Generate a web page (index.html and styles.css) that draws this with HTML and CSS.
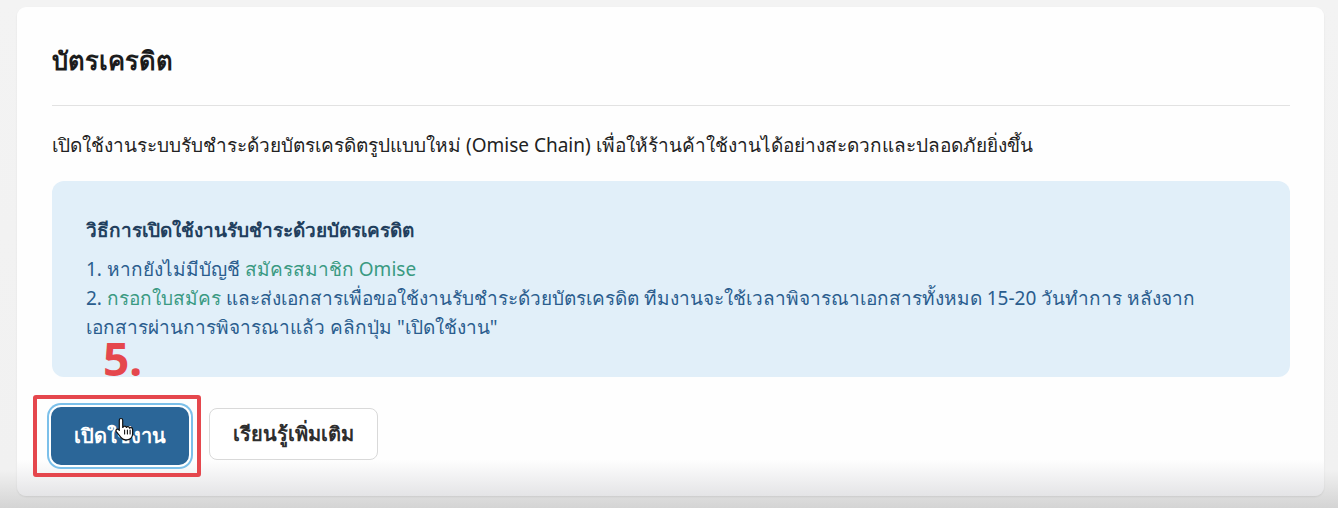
FILE: index.html
```html
<!DOCTYPE html>
<html lang="th">
<head>
<meta charset="utf-8">
<link rel="stylesheet" href="styles.css">
</head>
<body>
<div class="page">
  <section class="card">
    <h1 class="title">บัตรเครดิต</h1>
    <hr class="divider">
    <p class="desc">เปิดใช้งานระบบรับชำระด้วยบัตรเครดิตรูปแบบใหม่ (Omise Chain) เพื่อให้ร้านค้าใช้งานได้อย่างสะดวกและปลอดภัยยิ่งขึ้น</p>
    <div class="info">
      <h2 class="info-title">วิธีการเปิดใช้งานรับชำระด้วยบัตรเครดิต</h2>
      <p class="info-line">1. หากยังไม่มีบัญชี <span class="link">สมัครสมาชิก Omise</span></p>
      <p class="info-line">2. <span class="link">กรอกใบสมัคร</span> และส่งเอกสารเพื่อขอใช้งานรับชำระด้วยบัตรเครดิต ทีมงานจะใช้เวลาพิจารณาเอกสารทั้งหมด 15-20 วันทำการ หลังจาก<br>เอกสารผ่านการพิจารณาแล้ว คลิกปุ่ม "เปิดใช้งาน"</p>
    </div>
    <div class="actions">
      <div class="highlight">
        <button class="btn btn-primary">เปิดใช้งาน</button>
        <span class="step">5.</span>
        <svg class="cursor" width="20" height="24" viewBox="0 0 20 24">
          <path d="M6 1.5c1 0 1.7.7 1.7 1.7v7.3l.3-.1c.2-.8.9-1.3 1.7-1.3 .9 0 1.6.6 1.7 1.4.3-.5.9-.8 1.5-.8 .9 0 1.6.7 1.7 1.5.3-.3.8-.5 1.3-.5 1 0 1.7.8 1.7 1.7v4.6c0 3.3-2.4 5.8-5.6 5.8h-1.6c-1.9 0-3.5-.9-4.5-2.4L1.3 14.6c-.5-.7-.4-1.700.3-2.2.7-.5 1.6-.4 2.1.2l.6.8V3.2C4.3 2.2 5 1.5 6 1.5z" fill="#fff" stroke="#111" stroke-width="1.2" stroke-linejoin="round"/>
          <path d="M9.6 13v4M12.4 13v4M15.1 13v4" stroke="#111" stroke-width="1.1" stroke-linecap="round"/>
        </svg>
      </div>
      <button class="btn btn-secondary">เรียนรู้เพิ่มเติม</button>
    </div>
  </section>
</div>
</body>
</html>
```
FILE: styles.css
```css
* { box-sizing: border-box; }
html, body { margin: 0; padding: 0; }
body {
  width: 1338px;
  height: 508px;
  overflow: hidden;
  background: linear-gradient(to bottom, #f3f3f3 0, #f1f1f1 470px, #d4d4d4 508px);
  font-family: "Noto Sans", "DejaVu Sans", sans-serif;
  color: #222;
}
.page {
  padding: 7px 14px 0 17px;
}
.card {
  width: 1307px;
  height: 489px;
  background: linear-gradient(to bottom, #fefefe 0, #fefefe 453px, #e4e4e6 489px);
  border-radius: 9px;
  padding: 32px 34px 0 35px;
  box-shadow: 0 1px 2px rgba(0,0,0,0.08);
}
.title {
  margin: 0;
  font-size: 25.5px;
  font-weight: 600;
  line-height: 42px;
  color: #1c1c1c;
}
.divider {
  margin: 24px 0 0;
  border: 0;
  border-top: 1px solid #e2e2e2;
}
.desc {
  margin: 25px 0 0;
  font-size: 19px;
  line-height: 28px;
  color: #222;
}
.info {
  margin-top: 22px;
  background: #e1eff9;
  border-radius: 12px;
  padding: 35px 34px 34px;
  height: 196px;
}
.info-title {
  margin: 0;
  font-size: 19px;
  font-weight: 600;
  line-height: 29px;
  color: #223f5e;
}
.info-line {
  margin: 0;
  font-size: 19px;
  line-height: 29px;
  color: #2a5d8e;
}
.info-title + .info-line { margin-top: 10px; }
.link { color: #3a9a82; }
.actions {
  display: flex;
  align-items: center;
  gap: 8px;
  margin-top: 14px;
  margin-left: -19px;
}
.highlight {
  position: relative;
  border: 4px solid #e5474d;
  border-radius: 3px;
  padding: 5px 10px 6px 12px;
  width: 168px;
  height: 82px;
  margin-top: 4px;
}
.btn {
  font-family: inherit;
  font-size: 20px;
  font-weight: 600;
  cursor: pointer;
}
.btn-primary {
  width: 138px;
  height: 58px;
  border-radius: 10px;
  background: #2b6698;
  color: #fff;
  border: 2px solid #2b6698;
  box-shadow: 0 0 0 2px #fff, 0 0 0 4px #7cc0ea;
  margin: 3px 2px;
}
.btn-secondary {
  width: 169px;
  height: 52px;
  border-radius: 8px;
  background: #fff;
  color: #2e2e2e;
  border: 1px solid #d9d9d9;
}
.step {
  position: absolute;
  left: 66px;
  top: -59px;
  font-size: 46px;
  font-weight: 700;
  color: #e5474d;
  line-height: 36px;
}
.cursor {
  position: absolute;
  left: 78px;
  top: 18px;
}
```
